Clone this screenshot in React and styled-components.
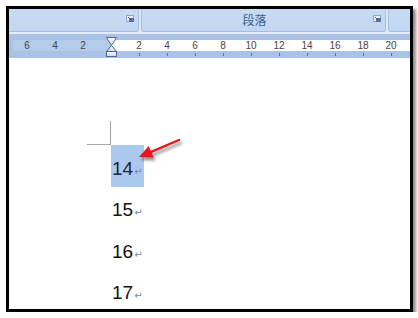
import styled, { createGlobalStyle } from "styled-components";

const GlobalStyle = createGlobalStyle`
  body {
    margin: 0;
    background: #ffffff;
    font-family: "Liberation Sans", Arial, sans-serif;
  }
`;

const Frame = styled.div`
  margin: 6px 0 0 6px;
  width: 407px;
  height: 306px;
  box-sizing: border-box;
  border: 3px solid #000000;
  box-shadow: 3px 3px 3px 0 rgba(0, 0, 0, 0.45);
  overflow: hidden;
  display: flex;
  flex-direction: column;
  background: #ffffff;
`;

const RibbonBar = styled.div`
  height: 23px;
  display: flex;
  gap: 2px;
  background: #dce8f6;
  flex-shrink: 0;
`;

const Group = styled.div`
  width: ${(p) => p.$width || "auto"};
  flex: ${(p) => (p.$grow ? 1 : "none")};
  margin-left: ${(p) => p.$ml || 0};
  margin-right: ${(p) => p.$mr || 0};
  display: flex;
  align-items: flex-start;
  box-sizing: border-box;
  border: 1px solid #a5bee2;
  border-top: none;
  border-radius: 0 0 3px 3px;
  background: linear-gradient(#c8dbf3, #c1d6f0);
`;

const GroupLabel = styled.div`
  flex: 1;
  text-align: center;
  padding-top: 5px;
  padding-right: 6px;
  font-family: "Noto Sans CJK SC", "Noto Sans", sans-serif;
  font-size: 12px;
  line-height: 12px;
  color: #3d5f93;
`;

const Launcher = styled.svg`
  flex-shrink: 0;
  margin: 6px 3px 0 auto;
  display: block;
`;

const Strip = styled.div`
  height: 2px;
  background: #e4edf8;
  flex-shrink: 0;
`;

const Ruler = styled.div`
  display: flex;
  height: 24px;
  padding-left: 4px;
  background: #a9c2e6;
  flex-shrink: 0;
`;

const Cell = styled.div`
  width: ${(p) => (p.$grow ? "auto" : "28px")};
  flex: ${(p) => (p.$grow ? 1 : "none")};
  display: flex;
  flex-direction: column;
  align-items: center;
  position: relative;
`;

const Band = styled.div`
  height: 6px;
  width: 100%;
`;

const Label = styled.div`
  height: 11px;
  width: 100%;
  text-align: center;
  font-size: 10px;
  line-height: 11px;
  color: #454545;
  background: ${(p) =>
    p.$bg === "split"
      ? "linear-gradient(to right, #b5cbea 50%, #ffffff 50%)"
      : p.$bg || "transparent"};
`;

const Tick = styled.div`
  width: 1px;
  height: 3px;
  margin-top: 2px;
  background: ${(p) => (p.$show ? "#5d7398" : "transparent")};
`;

const Marker = styled.svg`
  position: absolute;
  left: 9px;
  top: 3px;
`;

const Page = styled.div`
  flex: 1;
  position: relative;
  padding: 63px 0 0 78px;
  background: #ffffff;
`;

const CornerMark = styled.div`
  width: 23px;
  height: 23px;
  border-right: 1px solid #a6a6a6;
  border-bottom: 1px solid #a6a6a6;
`;

const Line = styled.div`
  height: 41.5px;
  display: flex;
  padding-left: 24px;
`;

const Seg = styled.div`
  height: 100%;
  box-sizing: border-box;
  display: flex;
  align-items: flex-end;
  padding: 0 1px 9px 1px;
  background: ${(p) => (p.$selected ? "#abc8ee" : "transparent")};
  font-size: 19px;
  line-height: 1;
  color: ${(p) => (p.$selected ? "#17253a" : "#111111")};
`;

const Pilcrow = styled.span`
  font-family: "DejaVu Sans", sans-serif;
  font-size: 10px;
  line-height: 1;
  color: #7588a6;
  margin-left: 1px;
  margin-bottom: 1px;
`;

const Arrow = styled.svg`
  position: absolute;
  left: 121px;
  top: 72px;
  overflow: visible;
`;

function LauncherIcon() {
  return (
    <Launcher width="9" height="8" viewBox="0 0 9 8">
      <rect x="0.5" y="0.5" width="7" height="6" fill="#e8eef7" stroke="#8ea6c9" />
      <rect x="3" y="3" width="5" height="4" fill="#5b72a0" />
      <path d="M2 2 L5 5" stroke="#3b4f78" strokeWidth="1" />
    </Launcher>
  );
}

const left = [6, 4, 2];
const right = [2, 4, 6, 8, 10, 12, 14, 16, 18, 20];
const lines = ["14", "15", "16", "17"];

export default function App() {
  return (
    <>
      <GlobalStyle />
      <Frame>
        <RibbonBar>
          <Group $width="133px" $ml="-3px">
            <LauncherIcon />
          </Group>
          <Group $width="245px">
            <GroupLabel>段落</GroupLabel>
            <LauncherIcon />
          </Group>
          <Group $grow $mr="-3px" />
        </RibbonBar>
        <Strip />
        <Ruler>
          {left.map((n) => (
            <Cell key={"l" + n}>
              <Band />
              <Label $bg="#b5cbea">{n}</Label>
              <Tick />
            </Cell>
          ))}
          <Cell>
            <Band />
            <Label $bg="split" />
            <Tick />
            <Marker width="11" height="20" viewBox="0 0 11 20">
              <defs>
                <linearGradient id="mk" x1="0" y1="0" x2="0" y2="1">
                  <stop offset="0" stopColor="#ffffff" />
                  <stop offset="1" stopColor="#c9d7ea" />
                </linearGradient>
              </defs>
              <path d="M0.5 0.5 H10.5 L5.5 8.5 Z" fill="url(#mk)" stroke="#4d6791" />
              <path d="M5.5 8.5 L10.5 14.5 H0.5 Z" fill="url(#mk)" stroke="#4d6791" />
              <rect x="0.5" y="14.5" width="10" height="5" fill="url(#mk)" stroke="#4d6791" />
            </Marker>
          </Cell>
          {right.map((n) => (
            <Cell key={"r" + n}>
              <Band />
              <Label $bg="#ffffff">{n}</Label>
              <Tick $show />
            </Cell>
          ))}
          <Cell $grow>
            <Band />
            <Label $bg="#ffffff" />
          </Cell>
        </Ruler>
        <Page>
          <CornerMark />
          {lines.map((t, i) => (
            <Line key={t}>
              <Seg $selected={i === 0}>
                {t}
                <Pilcrow>↵</Pilcrow>
              </Seg>
            </Line>
          ))}
          <Arrow width="60" height="40" viewBox="0 0 60 40">
            <defs>
              <filter id="sh" x="-30%" y="-30%" width="160%" height="180%">
                <feDropShadow dx="2" dy="3" stdDeviation="1.6" floodColor="#000" floodOpacity="0.45" />
              </filter>
            </defs>
            <g filter="url(#sh)">
              <line x1="49" y1="10" x2="20" y2="22.3" stroke="#e8141a" strokeWidth="2.4" strokeLinecap="round" />
              <path d="M9 27 L23.5 27.6 L18.6 16 Z" fill="#e8141a" />
            </g>
          </Arrow>
        </Page>
      </Frame>
    </>
  );
}
